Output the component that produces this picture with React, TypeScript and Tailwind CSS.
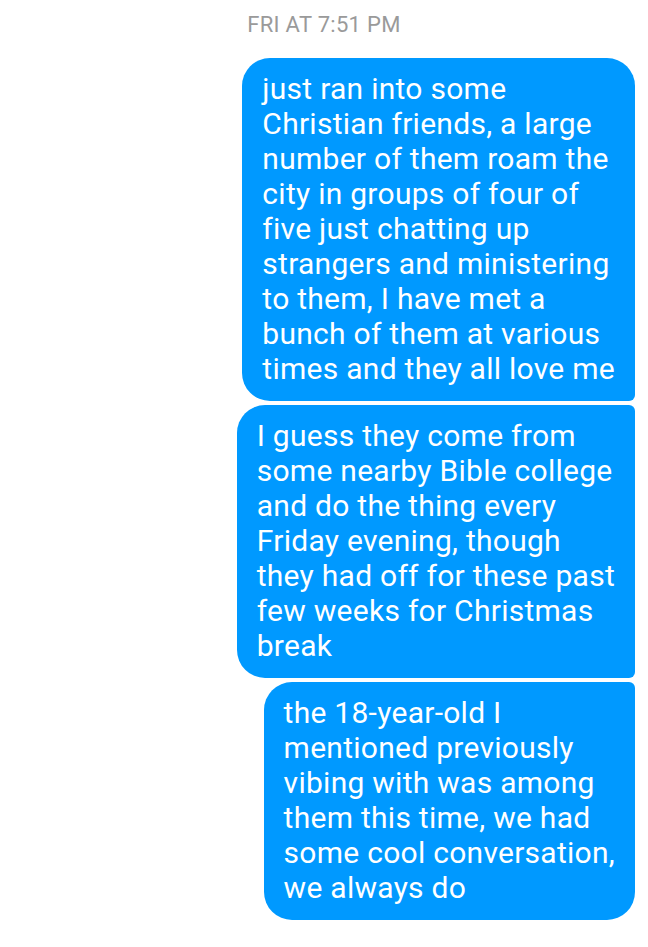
const messages = [
  {
    lines: [
      "just ran into some",
      "Christian friends, a large",
      "number of them roam the",
      "city in groups of four of",
      "five just chatting up",
      "strangers and ministering",
      "to them, I have met a",
      "bunch of them at various",
      "times and they all love me",
    ],
    shape: "rounded-[28px] rounded-br-[6px]",
  },
  {
    lines: [
      "I guess they come from",
      "some nearby Bible college",
      "and do the thing every",
      "Friday evening, though",
      "they had off for these past",
      "few weeks for Christmas",
      "break",
    ],
    shape: "rounded-[28px] rounded-tr-[6px] rounded-br-[6px]",
  },
  {
    lines: [
      "the 18-year-old I",
      "mentioned previously",
      "vibing with was among",
      "them this time, we had",
      "some cool conversation,",
      "we always do",
    ],
    shape: "rounded-[28px] rounded-tr-[6px]",
  },
];

export default function App() {
  return (
    <div className="min-h-[947px] w-[648px] bg-white font-['Roboto',sans-serif]">
      {/* timestamp */}
      <div className="pt-[12px] text-center text-[22px] leading-[26px] tracking-[0.3px] text-[#9a9a9a]">
        FRI AT 7:51 PM
      </div>

      {/* bubbles */}
      <div className="mt-[20px] flex flex-col items-end gap-[4px] pr-[13px]">
        {messages.map((m, i) => (
          <div
            key={i}
            className={`w-fit bg-[#0099ff] px-[20px] pt-[13px] pb-[15px] text-[30px] leading-[35px] tracking-[0.27px] text-white ${m.shape}`}
          >
            {m.lines.map((l, j) => (
              <div key={j} className="whitespace-nowrap">
                {l}
              </div>
            ))}
          </div>
        ))}
      </div>
    </div>
  );
}
